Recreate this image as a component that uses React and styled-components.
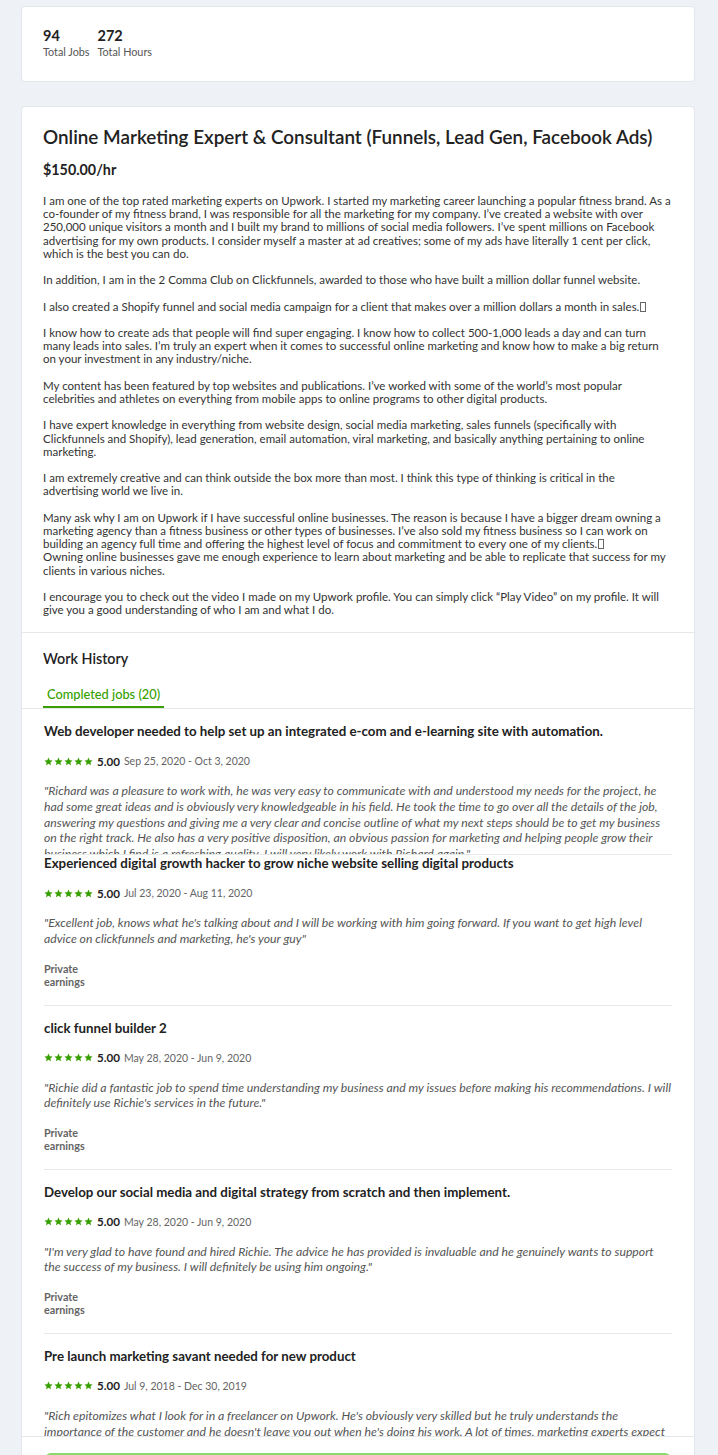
import React from 'react';
import styled, { createGlobalStyle } from 'styled-components';

const GlobalStyle = createGlobalStyle`
  html, body {
    margin: 0;
    padding: 0;
    background: #eef1f5;
  }
  body {
    font-family: Lato, "Open Sans", sans-serif;
    color: #222;
  }
`;

const Page = styled.div`
  padding: 6px 23px 0 21px;
  display: flex;
  flex-direction: column;
  gap: 24px;
  height: 1455px;
  overflow: hidden;
  box-sizing: border-box;
`;

const Card = styled.section`
  background: #fff;
  border: 1px solid #e3e6ea;
  border-radius: 4px;
`;

const Stats = styled.div`
  display: flex;
  gap: 8px;
  padding: 21px 21px 22px;
`;

const Stat = styled.div`
  display: flex;
  flex-direction: column;
  gap: 1px;
`;

const StatValue = styled.span`
  font-size: 14.5px;
  font-weight: 700;
  line-height: 16px;
  color: #222;
`;

const StatLabel = styled.span`
  font-size: 10.8px;
  line-height: 14px;
  color: #555;
`;

const Overview = styled.div`
  padding: 18px 21px 16px;
  border-bottom: 1px solid #e4e7ea;
`;

const Title = styled.h1`
  margin: 0;
  font-size: 18.85px;
  font-weight: 600;
  line-height: 24px;
  color: #222;
`;

const Rate = styled.div`
  margin: 12px 0 15px;
  font-size: 14.3px;
  font-weight: 700;
  line-height: 18px;
`;

const Para = styled.p`
  margin: 0 0 13.2px;
  font-size: 11.52px;
  line-height: 13.2px;
  color: #333;
  &:last-child {
    margin-bottom: 0;
  }
`;

const Tofu = styled.span`
  display: inline-block;
  width: 4px;
  height: 8px;
  border: 1px solid #666;
  margin-left: 1px;
  vertical-align: -1px;
`;

const HistoryHead = styled.div`
  padding: 17px 21px 0;
`;

const SectionTitle = styled.h2`
  margin: 0;
  font-size: 14.3px;
  font-weight: 600;
  line-height: 18px;
  color: #222;
`;

const Tabs = styled.div`
  display: flex;
  margin-top: 18px;
`;

const Tab = styled.div`
  padding: 0 4px 4px;
  font-size: 12.8px;
  font-weight: 500;
  line-height: 16px;
  color: ${p => (p.$active ? '#37a000' : '#656565')};
  border-bottom: 2px solid ${p => (p.$active ? '#37a000' : 'transparent')};
`;

const TabRule = styled.div`
  border-top: 1px solid #e4e7ea;
`;

const JobList = styled.div`
  height: 727px;
  overflow: hidden;
  padding: 0 22px;
`;

const Job = styled.article`
  padding: ${p => (p.$flush ? '0' : '14px')} 0 17px;
  border-bottom: 1px solid #e4ebe4;
  ${p => p.$clip && 'height: 146px; overflow: hidden; box-sizing: border-box;'}
`;

const JobTitle = styled.h3`
  margin: 0;
  font-size: 13.3px;
  font-weight: 700;
  line-height: 16px;
  color: #222;
`;

const RatingRow = styled.div`
  display: flex;
  align-items: center;
  gap: 4px;
  margin-top: 15px;
  height: 14px;
`;

const Stars = styled.span`
  display: inline-flex;
  gap: 1px;
`;

const Score = styled.span`
  font-size: 11.6px;
  font-weight: 700;
  color: #222;
`;

const Dates = styled.span`
  font-size: 10.5px;
  color: #656565;
`;

const Review = styled.p`
  margin: 15px 0 0;
  font-size: 12.25px;
  font-style: italic;
  line-height: 15.6px;
  color: #555;
`;

const Earnings = styled.div`
  margin-top: 15px;
  font-size: 10.8px;
  font-weight: 700;
  line-height: 13px;
  color: #656565;
`;

const Footer = styled.div`
  border-top: 1px solid #e4e7ea;
  padding: 16px 23px 20px;
`;

const LoadMore = styled.button`
  width: 100%;
  height: 32px;
  background: #fff;
  border: 2px solid #86d96a;
  border-radius: 6px;
  color: #37a000;
  font-family: inherit;
  font-size: 12px;
  font-weight: 700;
`;

const Star = () => (
  <svg width="9" height="9" viewBox="0 0 24 24" fill="#37a000">
    <path d="M12 1.5l3.2 7 7.6.8-5.7 5.1 1.6 7.5L12 18l-6.7 3.9 1.6-7.5L1.2 9.3l7.6-.8z" />
  </svg>
);

const jobs = [
  {
    title: 'Web developer needed to help set up an integrated e-com and e-learning site with automation.',
    dates: 'Sep 25, 2020 - Oct 3, 2020',
    review:
      '"Richard was a pleasure to work with, he was very easy to communicate with and understood my needs for the project, he had some great ideas and is obviously very knowledgeable in his field. He took the time to go over all the details of the job, answering my questions and giving me a very clear and concise outline of what my next steps should be to get my business on the right track. He also has a very positive disposition, an obvious passion for marketing and helping people grow their business which I find is a refreshing quality. I will very likely work with Richard again."',
    clip: true,
  },
  {
    title: 'Experienced digital growth hacker to grow niche website selling digital products',
    dates: 'Jul 23, 2020 - Aug 11, 2020',
    review:
      '"Excellent job, knows what he\'s talking about and I will be working with him going forward. If you want to get high level advice on clickfunnels and marketing, he\'s your guy"',
    flush: true,
  },
  {
    title: 'click funnel builder 2',
    dates: 'May 28, 2020 - Jun 9, 2020',
    review:
      '"Richie did a fantastic job to spend time understanding my business and my issues before making his recommendations.  I will definitely use Richie\'s services in the future."',
  },
  {
    title: 'Develop our social media and digital strategy from scratch and then implement.',
    dates: 'May 28, 2020 - Jun 9, 2020',
    review:
      '"I\'m very glad to have found and hired Richie. The advice he has provided is invaluable and he genuinely wants to support the success of my business. I will definitely be using him ongoing."',
  },
  {
    title: 'Pre launch marketing savant needed for new product',
    dates: 'Jul 9, 2018 - Dec 30, 2019',
    review:
      '"Rich epitomizes what I look for in a freelancer on Upwork. He\'s obviously very skilled but he truly understands the importance of the customer and he doesn\'t leave you out when he\'s doing his work. A lot of times, marketing experts expect you to just trust them, but Rich explains everything."',
  },
];

export default function App() {
  return (
    <>
      <GlobalStyle />
      <Page>
        <Card>
          <Stats>
            <Stat>
              <StatValue>94</StatValue>
              <StatLabel>Total Jobs</StatLabel>
            </Stat>
            <Stat>
              <StatValue>272</StatValue>
              <StatLabel>Total Hours</StatLabel>
            </Stat>
          </Stats>
        </Card>

        <Card>
          <Overview>
            <Title>Online Marketing Expert &amp; Consultant (Funnels, Lead Gen, Facebook Ads)</Title>
            <Rate>$150.00/hr</Rate>
            <Para>
              I am one of the top rated marketing experts on Upwork. I started my marketing career launching a popular
              fitness brand. As a co-founder of my fitness brand, I was responsible for all the marketing for my company.
              I’ve created a website with over 250,000 unique visitors a month and I built my brand to millions of social
              media followers. I’ve spent millions on Facebook advertising for my own products. I consider myself a master
              at ad creatives; some of my ads have literally 1 cent per click, which is the best you can do.
            </Para>
            <Para>
              In addition, I am in the 2 Comma Club on Clickfunnels, awarded to those who have built a million dollar
              funnel website.
            </Para>
            <Para>
              I also created a Shopify funnel and social media campaign for a client that makes over a million dollars a
              month in sales.<Tofu />
            </Para>
            <Para>
              I know how to create ads that people will find super engaging. I know how to collect 500-1,000 leads a day
              and can turn many leads into sales. I’m truly an expert when it comes to successful online marketing and know
              how to make a big return on your investment in any industry/niche.
            </Para>
            <Para>
              My content has been featured by top websites and publications. I’ve worked with some of the world’s most
              popular celebrities and athletes on everything from mobile apps to online programs to other digital products.
            </Para>
            <Para>
              I have expert knowledge in everything from website design, social media marketing, sales funnels
              (specifically with Clickfunnels and Shopify), lead generation, email automation, viral marketing, and
              basically anything pertaining to online marketing.
            </Para>
            <Para>
              I am extremely creative and can think outside the box more than most. I think this type of thinking is
              critical in the advertising world we live in.
            </Para>
            <Para>
              Many ask why I am on Upwork if I have successful online businesses. The reason is because I have a bigger
              dream owning a marketing agency than a fitness business or other types of businesses. I’ve also sold my
              fitness business so I can work on building an agency full time and offering the highest level of focus and
              commitment to every one of my clients.<Tofu />
              <br />
              Owning online businesses gave me enough experience to learn about marketing and be able to replicate that
              success for my clients in various niches.
            </Para>
            <Para>
              I encourage you to check out the video I made on my Upwork profile. You can simply click “Play Video” on my
              profile. It will give you a good understanding of who I am and what I do.
            </Para>
          </Overview>

          <HistoryHead>
            <SectionTitle>Work History</SectionTitle>
            <Tabs>
              <Tab $active>Completed jobs (20)</Tab>
            </Tabs>
          </HistoryHead>
          <TabRule />

          <JobList>
            {jobs.map(job => (
              <Job key={job.title} $clip={job.clip} $flush={job.flush}>
                <JobTitle>{job.title}</JobTitle>
                <RatingRow>
                  <Stars>
                    {[0, 1, 2, 3, 4].map(i => (
                      <Star key={i} />
                    ))}
                  </Stars>
                  <Score>5.00</Score>
                  <Dates>{job.dates}</Dates>
                </RatingRow>
                <Review>{job.review}</Review>
                <Earnings>
                  Private
                  <br />
                  earnings
                </Earnings>
              </Job>
            ))}
          </JobList>

          <Footer>
            <LoadMore>Load more</LoadMore>
          </Footer>
        </Card>
      </Page>
    </>
  );
}
